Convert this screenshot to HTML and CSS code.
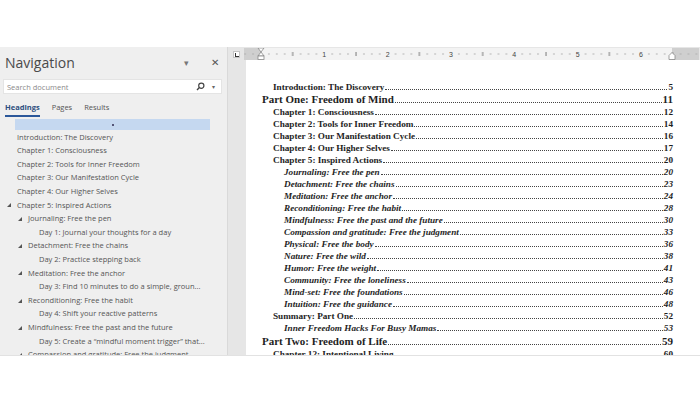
FILE: index.html
```html
<!DOCTYPE html>
<html>
<head>
<meta charset="utf-8">
<link rel="stylesheet" href="styles.css">
</head>
<body>
<div class="app">
  <aside class="nav">
    <div class="nav-head">
      <span class="nav-title">Navigation</span>
      <span class="nav-menu">▾</span>
      <span class="nav-close">✕</span>
    </div>
    <div class="search">
      <span class="ph">Search document</span>
      <svg class="mag" width="9" height="9" viewBox="0 0 9 9"><circle cx="5.3" cy="3.7" r="2.6" fill="none" stroke="#444" stroke-width="1.2"/><line x1="3.4" y1="5.6" x2="1" y2="8" stroke="#444" stroke-width="1.4"/></svg>
      <span class="dd">▾</span>
    </div>
    <div class="tabs">
      <span class="tab active">Headings</span>
      <span class="tab">Pages</span>
      <span class="tab">Results</span>
    </div>
    <ul class="tree">
      <li class="row"><span class="selbox"><span class="dot"></span></span></li>
      <li class="row l1">Introduction: The Discovery</li>
      <li class="row l1">Chapter 1: Consciousness</li>
      <li class="row l1">Chapter 2: Tools for Inner Freedom</li>
      <li class="row l1">Chapter 3: Our Manifestation Cycle</li>
      <li class="row l1">Chapter 4: Our Higher Selves</li>
      <li class="row l1 open"><span class="tri"></span>Chapter 5: Inspired Actions</li>
      <li class="row l2 open"><span class="tri"></span>Journaling: Free the pen</li>
      <li class="row l3">Day 1: Journal your thoughts for a day</li>
      <li class="row l2 open"><span class="tri"></span>Detachment: Free the chains</li>
      <li class="row l3">Day 2: Practice stepping back</li>
      <li class="row l2 open"><span class="tri"></span>Meditation: Free the anchor</li>
      <li class="row l3">Day 3: Find 10 minutes to do a simple, groun...</li>
      <li class="row l2 open"><span class="tri"></span>Reconditioning: Free the habit</li>
      <li class="row l3">Day 4: Shift your reactive patterns</li>
      <li class="row l2 open"><span class="tri"></span>Mindfulness: Free the past and the future</li>
      <li class="row l3">Day 5: Create a “mindful moment trigger” that...</li>
      <li class="row l2 open"><span class="tri"></span>Compassion and gratitude: Free the judgment</li>
    </ul>
  </aside>
  <div class="main">
    <div class="ruler-row">
      <div class="corner"><span class="tabstop"></span></div>
      <svg class="ruler" width="455" height="12" viewBox="0 0 455 12">
        <defs>
          <pattern id="ticks" x="17" y="0" width="63.33" height="12" patternUnits="userSpaceOnUse">
            <rect x="7.4" y="5.5" width="1" height="1" fill="#777"/>
            <rect x="15.3" y="5.5" width="1" height="1" fill="#777"/>
            <rect x="23.2" y="5.5" width="1" height="1" fill="#777"/>
            <rect x="31.2" y="4" width="1" height="4" fill="#777"/>
            <rect x="39.1" y="5.5" width="1" height="1" fill="#777"/>
            <rect x="47" y="5.5" width="1" height="1" fill="#777"/>
            <rect x="54.9" y="5.5" width="1" height="1" fill="#777"/>
          </pattern>
        </defs>
        <rect x="0" y="0" width="455" height="12" fill="#f3f3f3"/>
        <rect x="0" y="0" width="17" height="12" fill="#cfcfcf"/>
        <rect x="428" y="0" width="27" height="12" fill="#cfcfcf"/>
        <rect x="17" y="0" width="411" height="12" fill="url(#ticks)"/>
        <rect x="0" y="0" width="17" height="12" fill="url(#ticks)" opacity="0.7"/>
        <rect x="428" y="0" width="27" height="12" fill="url(#ticks)" opacity="0.7"/>
        <g class="rnum" font-size="7" fill="#444" text-anchor="middle">
          <text x="80.3" y="8.5">1</text>
          <text x="143.7" y="8.5">2</text>
          <text x="207" y="8.5">3</text>
          <text x="270.3" y="8.5">4</text>
          <text x="333.7" y="8.5">5</text>
          <text x="397" y="8.5">6</text>
        </g>
        <path d="M14 0 L20 0 L17 4 Z M17 4 L20 8 L14 8 Z" fill="#fff" stroke="#888" stroke-width="0.8"/>
        <rect x="14" y="8" width="6" height="3.5" fill="#fff" stroke="#888" stroke-width="0.8"/>
        <path d="M425 11.5 L425 7.5 L428 4.5 L431 7.5 L431 11.5 Z" fill="#fff" stroke="#888" stroke-width="0.8"/>
      </svg>
    </div>
    <div class="content-row">
      <div class="vgutter"></div>
      <div class="page">
        <ul class="toc">
          <li class="ln c"><span class="t">Introduction: The Discovery</span><span class="lead"></span><span class="pg">5</span></li>
          <li class="ln p"><span class="t">Part One: Freedom of Mind</span><span class="lead"></span><span class="pg">11</span></li>
          <li class="ln c"><span class="t">Chapter 1: Consciousness</span><span class="lead"></span><span class="pg">12</span></li>
          <li class="ln c"><span class="t">Chapter 2: Tools for Inner Freedom</span><span class="lead"></span><span class="pg">14</span></li>
          <li class="ln c"><span class="t">Chapter 3: Our Manifestation Cycle</span><span class="lead"></span><span class="pg">16</span></li>
          <li class="ln c"><span class="t">Chapter 4: Our Higher Selves</span><span class="lead"></span><span class="pg">17</span></li>
          <li class="ln c"><span class="t">Chapter 5: Inspired Actions</span><span class="lead"></span><span class="pg">20</span></li>
          <li class="ln s"><span class="t">Journaling: Free the pen</span><span class="lead"></span><span class="pg">20</span></li>
          <li class="ln s"><span class="t">Detachment: Free the chains</span><span class="lead"></span><span class="pg">23</span></li>
          <li class="ln s"><span class="t">Meditation: Free the anchor</span><span class="lead"></span><span class="pg">24</span></li>
          <li class="ln s"><span class="t">Reconditioning: Free the habit</span><span class="lead"></span><span class="pg">28</span></li>
          <li class="ln s"><span class="t">Mindfulness: Free the past and the future</span><span class="lead"></span><span class="pg">30</span></li>
          <li class="ln s"><span class="t">Compassion and gratitude: Free the judgment</span><span class="lead"></span><span class="pg">33</span></li>
          <li class="ln s"><span class="t">Physical: Free the body</span><span class="lead"></span><span class="pg">36</span></li>
          <li class="ln s"><span class="t">Nature: Free the wild</span><span class="lead"></span><span class="pg">38</span></li>
          <li class="ln s"><span class="t">Humor: Free the weight</span><span class="lead"></span><span class="pg">41</span></li>
          <li class="ln s"><span class="t">Community: Free the loneliness</span><span class="lead"></span><span class="pg">43</span></li>
          <li class="ln s"><span class="t">Mind-set: Free the foundations</span><span class="lead"></span><span class="pg">46</span></li>
          <li class="ln s"><span class="t">Intuition: Free the guidance</span><span class="lead"></span><span class="pg">48</span></li>
          <li class="ln c"><span class="t">Summary: Part One</span><span class="lead"></span><span class="pg">52</span></li>
          <li class="ln s"><span class="t">Inner Freedom Hacks For Busy Mamas</span><span class="lead"></span><span class="pg">53</span></li>
          <li class="ln p p2"><span class="t">Part Two: Freedom of Life</span><span class="lead"></span><span class="pg">59</span></li>
          <li class="ln c"><span class="t">Chapter 12: Intentional Living</span><span class="lead"></span><span class="pg">60</span></li>
        </ul>
      </div>
    </div>
  </div>
</div>
</body>
</html>
```
FILE: styles.css
```css
* { box-sizing: border-box; }
html, body { margin: 0; padding: 0; background: #fff; }
body { width: 700px; height: 400px; overflow: hidden; font-family: "Open Sans", "Noto Sans", sans-serif; }

.app {
  margin-top: 47px;
  height: 309px;
  display: flex;
  overflow: hidden;
  border-bottom: 1px solid #e2e2e2;
}

/* Navigation pane */
.nav {
  width: 228px;
  flex: none;
  background: #efefef;
  border-right: 1px solid #d9d9d9;
  display: flex;
  flex-direction: column;
  overflow: hidden;
}
.nav > * { flex: none; }
.nav-head {
  height: 30px;
  display: flex;
  align-items: center;
  padding: 0 0 0 5px;
  margin-bottom: 2px;
}
.nav-title { font-size: 14px; color: #4a4a4a; flex: 1; }
.nav-menu { font-size: 9px; color: #777; width: 27px; }
.nav-close { font-size: 10px; color: #555; width: 16px; }

.search {
  margin: 0 5px 0 3px;
  height: 15px;
  background: #fff;
  border: 1px solid #e4e4e4;
  display: flex;
  align-items: center;
  padding: 0 0 0 3px;
}
.search .ph { flex: 1; font-size: 7.5px; color: #8a8a8a; }
.search .mag { margin-right: 7px; }
.search .dd { font-size: 6px; color: #666; width: 9px; }

.tabs { display: flex; padding-left: 5px; height: 23px; align-items: flex-end; }
.tab {
  font-size: 7.5px;
  color: #555;
  line-height: 10px;
  padding-bottom: 3px;
  border-bottom: 2px solid transparent;
  margin-right: 12px;
}
.tab.active { color: #2c4e7e; font-weight: 700; border-bottom-color: #2b579a; }

.tree { list-style: none; margin: 0; padding: 0; }
.row {
  height: 13.6px;
  line-height: 13.6px;
  font-size: 7.5px;
  color: #555;
  white-space: nowrap;
  display: flex;
  align-items: center;
}
.selbox {
  display: flex;
  justify-content: center;
  align-items: center;
  margin: 2px 0 0 15px;
  width: 195px;
  height: 11px;
  background: #c5d8f0;
}
.dot { width: 2px; height: 2px; background: #557; }
.l1 { padding-left: 17px; }
.l2 { padding-left: 28px; }
.l3 { padding-left: 39px; }
.tri {
  width: 0; height: 0;
  border-left: 4px solid transparent;
  border-bottom: 4px solid #555;
  margin-left: -10px;
  margin-right: 6px;
}

/* Main document area */
.main { flex: 1; display: flex; flex-direction: column; background: #e6e6e6; overflow: hidden; }
.ruler-row { display: flex; height: 13px; padding-top: 1px; flex: none; }
.corner { width: 16px; flex: none; display: flex; justify-content: center; align-items: center; }
.tabstop {
  width: 7px; height: 7px; background: #fff; border: 1px solid #c4c4c4; position: relative;
}
.tabstop::after {
  content: ""; position: absolute; left: 1px; top: 1px; width: 3px; height: 3px;
  border-left: 1px solid #333; border-bottom: 1px solid #333;
}
.ruler { display: block; }
.rnum { font-family: "Liberation Sans", sans-serif; }

.content-row { flex: 1; display: flex; }
.vgutter { width: 18px; flex: none; }
.page { flex: 1; background: #fff; padding: 21px 27px 0 16px; overflow: hidden; }

.toc { list-style: none; margin: 0; padding: 0; font-family: "Liberation Serif", serif; color: #1e1e1e; font-weight: 700; }
.ln { display: flex; align-items: baseline; height: 12px; line-height: 12px; font-size: 9.2px; white-space: nowrap; }
.ln.p { height: 13px; line-height: 13px; font-size: 11px; }
.ln.p2 { margin-top: 1px; }
.ln.c { padding-left: 11px; }
.ln.s { padding-left: 22px; font-style: italic; }
.lead { flex: 1; border-bottom: 1px dotted #444; margin: 0 1px; }
.pg { text-align: right; }
```
